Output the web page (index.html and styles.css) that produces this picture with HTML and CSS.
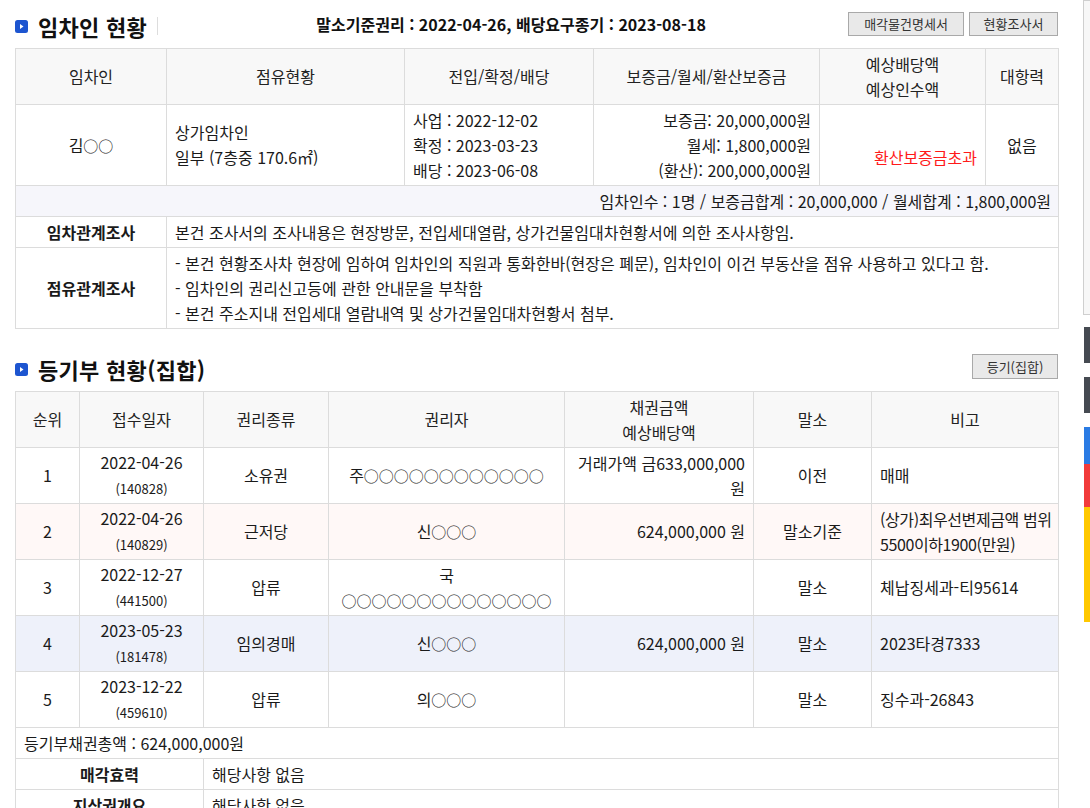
FILE: index.html
```html
<!DOCTYPE html>
<html lang="ko">
<head>
<meta charset="utf-8">
<title>임차인 현황</title>
<link rel="stylesheet" href="styles.css">
</head>
<body>
<div class="page">
  <div class="sec-head first">
    <div class="sec-title"><span class="icon"><svg width="13" height="13" viewBox="0 0 13 13"><rect x="0" y="0" width="13" height="13" rx="2.5" fill="#1d55d0"/><path d="M5 4 L8.5 6.5 L5 9 Z" fill="#fff"/></svg></span>임차인 현황<span class="sep"></span></div>
    <div class="sec-sub">말소기준권리 : 2022-04-26, 배당요구종기 : 2023-08-18</div>
    <div class="btns"><button class="btn w1">매각물건명세서</button><button class="btn w2">현황조사서</button></div>
  </div>
  <table class="grid t1">
    <colgroup><col style="width:151px"><col style="width:238px"><col style="width:189px"><col style="width:226px"><col style="width:166px"><col style="width:73px"></colgroup>
    <tr class="h56">
      <th>임차인</th><th>점유현황</th><th>전입/확정/배당</th><th>보증금/월세/환산보증금</th><th>예상배당액<br>예상인수액</th><th>대항력</th>
    </tr>
    <tr class="h81">
      <td class="c">김<span class="o">○○</span></td>
      <td class="l">상가임차인<br>일부 (7층중 170.6㎡)</td>
      <td class="l">사업 : 2022-12-02<br>확정 : 2023-03-23<br>배당 : 2023-06-08</td>
      <td class="r">보증금: 20,000,000원<br>월세: 1,800,000원<br>(환산): 200,000,000원</td>
      <td class="r"><div class="blank"></div><div class="red">환산보증금초과</div></td>
      <td class="c">없음</td>
    </tr>
    <tr class="h31 sum">
      <td colspan="6" class="r">임차인수 : 1명 / 보증금합계 : 20,000,000 / 월세합계 : 1,800,000원</td>
    </tr>
    <tr class="h31">
      <td class="c b">임차관계조사</td>
      <td colspan="5" class="l">본건 조사서의 조사내용은 현장방문, 전입세대열람, 상가건물임대차현황서에 의한 조사사항임.</td>
    </tr>
    <tr class="h81">
      <td class="c b">점유관계조사</td>
      <td colspan="5" class="l">- 본건 현황조사차 현장에 임하여 임차인의 직원과 통화한바(현장은 폐문), 임차인이 이건 부동산을 점유 사용하고 있다고 함.<br>- 임차인의 권리신고등에 관한 안내문을 부착함<br>- 본건 주소지내 전입세대 열람내역 및 상가건물임대차현황서 첨부.</td>
    </tr>
  </table>

  <div class="sec-head second">
    <div class="sec-title"><span class="icon"><svg width="13" height="13" viewBox="0 0 13 13"><rect x="0" y="0" width="13" height="13" rx="2.5" fill="#1d55d0"/><path d="M5 4 L8.5 6.5 L5 9 Z" fill="#fff"/></svg></span>등기부 현황(집합)</div>
    <div class="spacer"></div>
    <div class="btns"><button class="btn w3">등기(집합)</button></div>
  </div>
  <table class="grid t2">
    <colgroup><col style="width:64px"><col style="width:124px"><col style="width:125px"><col style="width:236px"><col style="width:189px"><col style="width:118px"><col style="width:187px"></colgroup>
    <tr class="h56">
      <th>순위</th><th>접수일자</th><th>권리종류</th><th>권리자</th><th>채권금액<br>예상배당액</th><th>말소</th><th>비고</th>
    </tr>
    <tr class="h56">
      <td class="c">1</td><td class="c">2022-04-26<br><span class="sm">(140828)</span></td><td class="c">소유권</td><td class="c">주<span class="o">○○○○○○○○○○○○</span></td><td class="r">거래가액 금633,000,000<br>원</td><td class="c">이전</td><td class="l">매매</td>
    </tr>
    <tr class="h56 pink">
      <td class="c">2</td><td class="c">2022-04-26<br><span class="sm">(140829)</span></td><td class="c">근저당</td><td class="c">신<span class="o">○○○</span></td><td class="r">624,000,000 원</td><td class="c">말소기준</td><td class="l nw">(상가)최우선변제금액 범위<br>5500이하1900(만원)</td>
    </tr>
    <tr class="h56">
      <td class="c">3</td><td class="c">2022-12-27<br><span class="sm">(441500)</span></td><td class="c">압류</td><td class="c">국<br><span class="o">○○○○○○○○○○○○○○</span></td><td class="r"></td><td class="c">말소</td><td class="l">체납징세과-티95614</td>
    </tr>
    <tr class="h56 blue">
      <td class="c">4</td><td class="c">2023-05-23<br><span class="sm">(181478)</span></td><td class="c">임의경매</td><td class="c">신<span class="o">○○○</span></td><td class="r">624,000,000 원</td><td class="c">말소</td><td class="l">2023타경7333</td>
    </tr>
    <tr class="h56">
      <td class="c">5</td><td class="c">2023-12-22<br><span class="sm">(459610)</span></td><td class="c">압류</td><td class="c">의<span class="o">○○○</span></td><td class="r"></td><td class="c">말소</td><td class="l">징수과-26843</td>
    </tr>
    <tr class="h31">
      <td colspan="7" class="l">등기부채권총액 : 624,000,000원</td>
    </tr>
    <tr class="h31">
      <td colspan="2" class="c b">매각효력</td><td colspan="5" class="l">해당사항 없음</td>
    </tr>
    <tr class="h31">
      <td colspan="2" class="c b">지상권개요</td><td colspan="5" class="l">해당사항 없음</td>
    </tr>
  </table>
</div>

<div class="side">
  <div class="side-box"></div>
  <div class="side-dark"></div>
  <div class="side-dark"></div>
  <div class="side-color"><div class="sc-blue"></div><div class="sc-red"></div><div class="sc-yellow"></div></div>
</div>
</body>
</html>
```

FILE: styles.css
```css
html, body {
  margin: 0;
  padding: 0;
  background: #fff;
}
body {
  font-family: "Noto Sans CJK KR", "Noto Sans", sans-serif;
  font-size: 16px;
  color: #1a1a1a;
}
.page {
  width: 1043px;
  padding-left: 15px;
}
.sec-head {
  display: flex;
  align-items: flex-start;
}
.sec-head.first {
  height: 48px;
}
.sec-head.second {
  height: 62px;
}
.sec-title {
  display: flex;
  align-items: center;
  font-size: 22px;
  font-weight: bold;
  line-height: 26px;
  color: #111;
  letter-spacing: 0.3px;
}
.first .sec-title {
  margin-top: 13px;
}
.second .sec-title {
  margin-top: 27px;
}
.icon {
  display: inline-flex;
  width: 13px;
  height: 13px;
  margin-right: 10px;
}
.sep {
  display: inline-block;
  width: 0;
  height: 18px;
  border-left: 1px solid #ddd;
  margin-left: 10px;
}
.sec-sub {
  flex: 1;
  text-align: center;
  font-weight: bold;
  font-size: 16px;
  line-height: 20px;
  margin-top: 14px;
  padding-left: 16px;
  color: #111;
}
.spacer {
  flex: 1;
}
.btns {
  display: flex;
  gap: 5px;
}
.first .btns {
  margin-top: 12px;
}
.second .btns {
  margin-top: 25px;
}
.btn {
  height: 24px;
  padding: 0;
  margin: 0;
  background: #e9e9e9;
  border: 1px solid #a9a9a9;
  font-family: "Noto Sans CJK KR", "Noto Sans", sans-serif;
  font-size: 13px;
  line-height: 20px;
  color: #333;
}
.w1 { width: 116px; }
.w2 { width: 89px; }
.w3 { width: 86px; height: 25px; }

.grid {
  width: 1043px;
  border-collapse: collapse;
  table-layout: fixed;
}
.grid th, .grid td {
  border: 1px solid #dcdcdc;
  padding: 0 8px;
  line-height: 25px;
  vertical-align: middle;
}
.grid th {
  background: #f8f8f8;
  font-weight: normal;
  color: #222;
  text-align: center;
}
.h56 { height: 56px; }
.h81 { height: 81px; }
.h31 { height: 31px; }
.c { text-align: center; }
.l { text-align: left; }
.r { text-align: right; }
.b { font-weight: bold; }
.o { font-size: 15px; }
.nw { white-space: nowrap; letter-spacing: -0.4px; }
.sum td { background: #f6f6fb; padding-right: 7px; }
.pink td { background: #fff8f7; }
.blue td { background: #eef1fa; }
.red { color: #ff1a1a; }
.blank { height: 25px; }
.sm {
  font-size: 13px;
  line-height: 25px;
}

.side {
  position: fixed;
  left: 1083px;
  top: 0;
  width: 20px;
}
.side-box {
  height: 313px;
  border: 1px solid #cfcfcf;
  background: #f7f7f7;
}
.side-dark {
  margin-top: 12px;
  margin-left: 1px;
  height: 36px;
  background: #454a52;
}
.side-dark + .side-dark {
  margin-top: 14px;
}
.side-color {
  margin-top: 14px;
  margin-left: 1px;
}
.sc-blue { height: 37px; background: #2a7be4; }
.sc-red { height: 43px; background: #f23b3b; }
.sc-yellow { height: 115px; background: #ffc800; }
```
